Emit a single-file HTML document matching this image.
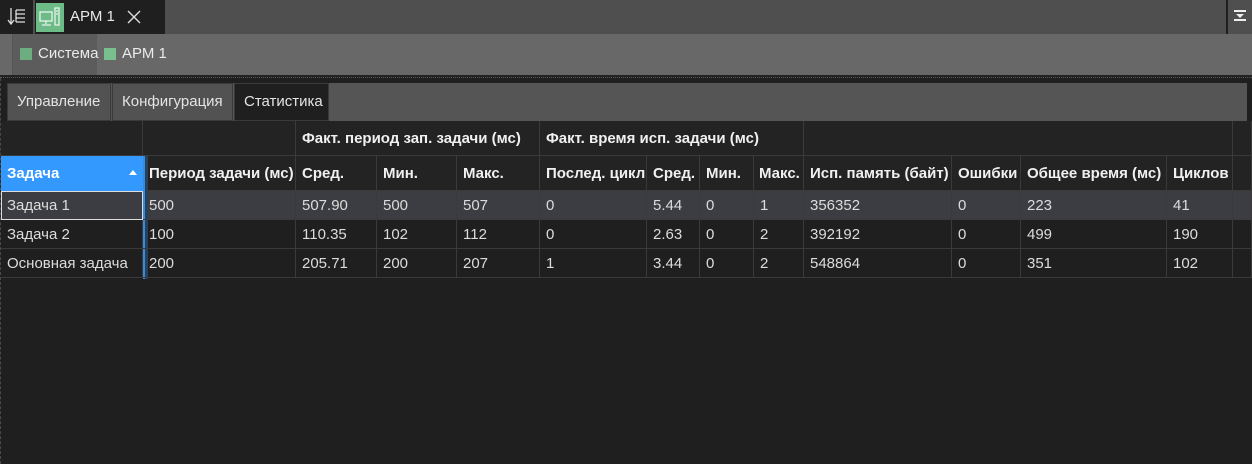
<!DOCTYPE html><html><head><meta charset="utf-8"><style>
*{margin:0;padding:0;box-sizing:border-box}
body{width:1252px;height:464px;background:#1f1f1f;font-family:"Liberation Sans","DejaVu Sans",sans-serif;font-size:15px;color:#e6e6e6;position:relative;overflow:hidden}
.a{position:absolute}
.c{position:absolute;padding-left:6px;white-space:nowrap;overflow:hidden;border-right:1px solid #3a3a3a;border-bottom:1px solid #3a3a3a}
.h{font-weight:bold;color:#f0f0f0;background:#232323;display:flex;align-items:center}
.d{display:flex;align-items:center;color:#dcdcdc}
</style></head><body>
<div class="a" style="left:0;top:0;width:1252px;height:34px;background:#4f4f4f"></div>
<div class="a" style="left:0;top:0;width:165px;height:34px;background:#1f1f1f"></div>
<div class="a" style="left:33px;top:0;width:2px;height:34px;background:#4f4f4f"></div>
<svg class="a" style="left:6px;top:6px" width="22" height="22" viewBox="0 0 22 22" fill="none" stroke="#ddd" stroke-width="1.3"><path d="M5 2v15M2 14l3 4 3-4M10 4h9M10 8h9M10 12h9M10 16h9M10 4v12"/></svg>
<div class="a" style="left:36px;top:3px;width:28px;height:29px;background:#6dbb87"></div>
<svg class="a" style="left:38px;top:6px" width="24" height="22" viewBox="0 0 24 22" fill="none" stroke="#e8f4ea" stroke-width="1.3"><rect x="2" y="6" width="12" height="9"/><path d="M8 15v3M4 19h9"/><rect x="17" y="2" width="4" height="17"/><path d="M18 5h2M18 8h2"/></svg>
<div class="a" style="left:70px;top:8px;color:#e8e8e8;font-size:15px">АРМ 1</div>
<svg class="a" style="left:127px;top:10px" width="14" height="14" stroke="#ddd" stroke-width="1.4"><path d="M1 1l12 12M13 1L1 13"/></svg>
<div class="a" style="left:1226px;top:0;width:2px;height:34px;background:#1f1f1f"></div>
<svg class="a" style="left:1233px;top:10px" width="14" height="12" fill="#eee"><rect x="1" y="0" width="12" height="2"/><path d="M3 4h8l-4 4z"/><rect x="1" y="9" width="12" height="2"/></svg>
<div class="a" style="left:0;top:34px;width:1252px;height:41px;background:#686868"></div>
<div class="a" style="left:12px;top:34px;width:85px;height:41px;background:#5c5c5c;border-left:1px solid #555"></div>
<div class="a" style="left:20px;top:48px;width:12px;height:12px;background:#6dae80"></div>
<div class="a" style="left:38px;top:45px;color:#eaeaea">Система</div>
<div class="a" style="left:104px;top:48px;width:12px;height:12px;background:#79c08e"></div>
<div class="a" style="left:122px;top:45px;color:#eaeaea">АРМ 1</div>
<div class="a" style="left:0;top:75px;width:1252px;height:3px;background:#222;border-bottom:1px dotted #555"></div>
<div class="a" style="left:0;top:78px;width:3px;height:386px;border-left:1px dashed #4a4a4a"></div>
<div class="a" style="left:7px;top:83px;width:1240px;height:38px;background:#555"></div>
<div class="a" style="left:7px;top:83px;width:104px;height:38px;background:#525252;border:1px solid #3a3a3a;color:#e4e4e4;padding:9px 0 0 9px">Управление</div>
<div class="a" style="left:112px;top:83px;width:121px;height:38px;background:#525252;border:1px solid #3a3a3a;color:#e4e4e4;padding:9px 0 0 9px">Конфигурация</div>
<div class="a" style="left:234px;top:83px;width:95px;height:38px;background:#1f1f1f;border:1px solid #3a3a3a;color:#e4e4e4;padding:9px 0 0 9px">Статистика</div>
<div class="a" style="left:1px;top:121px;width:1251px;height:158px;background:#232323"></div>
<div class="c h" style="left:1px;top:121px;width:142px;height:35px"></div>
<div class="c h" style="left:143px;top:121px;width:153px;height:35px"></div>
<div class="c h" style="left:296px;top:121px;width:244px;height:35px">Факт. период зап. задачи (мс)</div>
<div class="c h" style="left:540px;top:121px;width:264px;height:35px">Факт. время исп. задачи (мс)</div>
<div class="c h" style="left:804px;top:121px;width:429px;height:35px"></div>
<div class="c h" style="left:1233px;top:121px;width:19px;height:35px"></div>
<div class="c h" style="left:1px;top:156px;width:142px;height:35px;background:#3399ff;color:#fff;border-color:#3399ff">Задача</div>
<svg class="a" style="left:129px;top:170px" width="8" height="5"><path d="M0 5L4 0 8 5z" fill="#fff"/></svg>
<div class="c h" style="left:143px;top:156px;width:153px;height:35px">Период задачи (мс)</div>
<div class="c h" style="left:296px;top:156px;width:81px;height:35px">Сред.</div>
<div class="c h" style="left:377px;top:156px;width:80px;height:35px">Мин.</div>
<div class="c h" style="left:457px;top:156px;width:83px;height:35px">Макс.</div>
<div class="c h" style="left:540px;top:156px;width:107px;height:35px">Послед. цикл</div>
<div class="c h" style="left:647px;top:156px;width:53px;height:35px">Сред.</div>
<div class="c h" style="left:700px;top:156px;width:54px;height:35px">Мин.</div>
<div class="c h" style="left:754px;top:156px;width:50px;height:35px;padding-left:5px">Макс.</div>
<div class="c h" style="left:804px;top:156px;width:148px;height:35px">Исп. память (байт)</div>
<div class="c h" style="left:952px;top:156px;width:69px;height:35px">Ошибки</div>
<div class="c h" style="left:1021px;top:156px;width:146px;height:35px">Общее время (мс)</div>
<div class="c h" style="left:1167px;top:156px;width:66px;height:35px">Циклов</div>
<div class="c h" style="left:1233px;top:156px;width:19px;height:35px"></div>
<div class="a" style="left:1px;top:191px;width:1251px;height:29px;background:#3c3d42"></div>
<div class="a" style="left:1px;top:220px;width:1251px;height:59px;background:#1f1f1f"></div>
<div class="c d" style="left:1px;top:191px;width:142px;height:29px;border:1px solid #ddd;padding-left:5px">Задача 1</div>
<div class="c d" style="left:1px;top:220px;width:142px;height:29px">Задача 2</div>
<div class="c d" style="left:1px;top:249px;width:142px;height:29px">Основная задача</div>
<div class="a" style="left:143px;top:156px;width:5px;height:123px;background:#24415e;border-left:2px solid #3a8ad8"></div>
<div class="c d" style="left:143px;top:191px;width:153px;height:29px">500</div>
<div class="c d" style="left:296px;top:191px;width:81px;height:29px">507.90</div>
<div class="c d" style="left:377px;top:191px;width:80px;height:29px">500</div>
<div class="c d" style="left:457px;top:191px;width:83px;height:29px">507</div>
<div class="c d" style="left:540px;top:191px;width:107px;height:29px">0</div>
<div class="c d" style="left:647px;top:191px;width:53px;height:29px">5.44</div>
<div class="c d" style="left:700px;top:191px;width:54px;height:29px">0</div>
<div class="c d" style="left:754px;top:191px;width:50px;height:29px">1</div>
<div class="c d" style="left:804px;top:191px;width:148px;height:29px">356352</div>
<div class="c d" style="left:952px;top:191px;width:69px;height:29px">0</div>
<div class="c d" style="left:1021px;top:191px;width:146px;height:29px">223</div>
<div class="c d" style="left:1167px;top:191px;width:66px;height:29px">41</div>
<div class="c d" style="left:1233px;top:191px;width:19px;height:29px"></div>
<div class="c d" style="left:143px;top:220px;width:153px;height:29px">100</div>
<div class="c d" style="left:296px;top:220px;width:81px;height:29px">110.35</div>
<div class="c d" style="left:377px;top:220px;width:80px;height:29px">102</div>
<div class="c d" style="left:457px;top:220px;width:83px;height:29px">112</div>
<div class="c d" style="left:540px;top:220px;width:107px;height:29px">0</div>
<div class="c d" style="left:647px;top:220px;width:53px;height:29px">2.63</div>
<div class="c d" style="left:700px;top:220px;width:54px;height:29px">0</div>
<div class="c d" style="left:754px;top:220px;width:50px;height:29px">2</div>
<div class="c d" style="left:804px;top:220px;width:148px;height:29px">392192</div>
<div class="c d" style="left:952px;top:220px;width:69px;height:29px">0</div>
<div class="c d" style="left:1021px;top:220px;width:146px;height:29px">499</div>
<div class="c d" style="left:1167px;top:220px;width:66px;height:29px">190</div>
<div class="c d" style="left:1233px;top:220px;width:19px;height:29px"></div>
<div class="c d" style="left:143px;top:249px;width:153px;height:29px">200</div>
<div class="c d" style="left:296px;top:249px;width:81px;height:29px">205.71</div>
<div class="c d" style="left:377px;top:249px;width:80px;height:29px">200</div>
<div class="c d" style="left:457px;top:249px;width:83px;height:29px">207</div>
<div class="c d" style="left:540px;top:249px;width:107px;height:29px">1</div>
<div class="c d" style="left:647px;top:249px;width:53px;height:29px">3.44</div>
<div class="c d" style="left:700px;top:249px;width:54px;height:29px">0</div>
<div class="c d" style="left:754px;top:249px;width:50px;height:29px">2</div>
<div class="c d" style="left:804px;top:249px;width:148px;height:29px">548864</div>
<div class="c d" style="left:952px;top:249px;width:69px;height:29px">0</div>
<div class="c d" style="left:1021px;top:249px;width:146px;height:29px">351</div>
<div class="c d" style="left:1167px;top:249px;width:66px;height:29px">102</div>
<div class="c d" style="left:1233px;top:249px;width:19px;height:29px"></div>
</body></html>
